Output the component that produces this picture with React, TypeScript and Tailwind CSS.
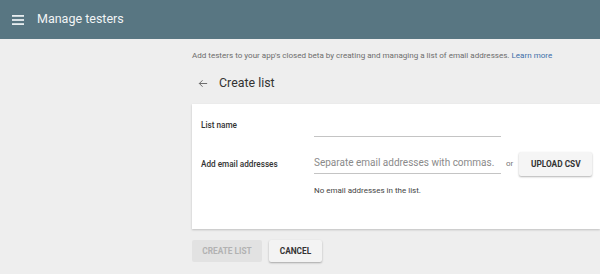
import React from 'react';

export default function App() {
  return (
    <div className="w-[600px] h-[274px] overflow-hidden bg-[#eeeeee] font-['Roboto',sans-serif] text-[#212121]">
      {/* Top app bar */}
      <div className="h-[39px] bg-[#587682] flex items-center">
        <div className="w-[37px] flex justify-center pr-[2px]">
          <svg width="12" height="10" viewBox="0 0 12 10" fill="#e8eef0">
            <rect x="0" y="0" width="12" height="1.8" />
            <rect x="0" y="4.1" width="12" height="1.8" />
            <rect x="0" y="8.2" width="12" height="1.8" />
          </svg>
        </div>
        <span className="text-[12.5px] text-[#f1f4f5]">Manage testers</span>
      </div>

      <div className="pl-[192px]">
        <p className="mt-[11px] text-[8.05px] text-[#6d6d6d] leading-[12px] whitespace-nowrap">
          Add testers to your app's closed beta by creating and managing a list of email addresses.{' '}
          <span className="text-[#3f6ea8]">Learn more</span>
        </p>

        <div className="flex items-center h-[22px] mt-[10px]">
          <svg width="12" height="11" viewBox="0 0 24 24" className="ml-[5px]" fill="none" stroke="#616161" strokeWidth="2">
            <path d="M21 12H4M11 5l-7 7 7 7" />
          </svg>
          <span className="ml-[10px] text-[12.4px] text-[#333]">Create list</span>
        </div>

        {/* Card */}
        <div className="mt-[10px] h-[125px] bg-white shadow-[0_1px_2px_rgba(0,0,0,0.2)] pl-[9px] pt-[10px]">
          <div className="flex items-center h-[23px]">
            <span className="w-[113px] shrink-0 text-[8.2px] font-medium text-[#333]">List name</span>
            <div className="w-[187px] shrink-0 h-[23px] border-b border-[#c4c4c4]" />
          </div>

          <div className="flex items-center h-[24px] mt-[15px]">
            <span className="w-[113px] shrink-0 text-[8.2px] font-medium text-[#333]">Add email addresses</span>
            <div className="w-[187px] shrink-0 h-[22px] border-b border-[#c4c4c4] flex items-center mb-[2px]">
              <span className="text-[10px] text-[#8a8a8a] whitespace-nowrap">Separate email addresses with commas.</span>
            </div>
            <span className="ml-[5px] text-[8px] text-[#777]">or</span>
            <button className="ml-[6px] shrink-0 w-[73px] h-[24px] bg-[#f5f5f5] text-[8.3px] font-bold text-[#333] rounded-[2px] shadow-[0_1px_2px_rgba(0,0,0,0.3)]">
              UPLOAD CSV
            </button>
          </div>

          <p className="ml-[113px] mt-[10px] text-[8px] leading-[10px] text-[#444]">No email addresses in the list.</p>
        </div>

        <div className="flex gap-[7px] mt-[11px]">
          <button className="w-[70px] h-[22px] bg-[#e2e2e2] text-[8.3px] font-bold text-[#b2b2b2] rounded-[2px]">
            CREATE LIST
          </button>
          <button className="w-[53px] h-[22px] bg-[#f3f3f3] text-[8.3px] font-bold text-[#333] rounded-[2px] shadow-[0_1px_2px_rgba(0,0,0,0.3)]">
            CANCEL
          </button>
        </div>
      </div>
    </div>
  );
}
